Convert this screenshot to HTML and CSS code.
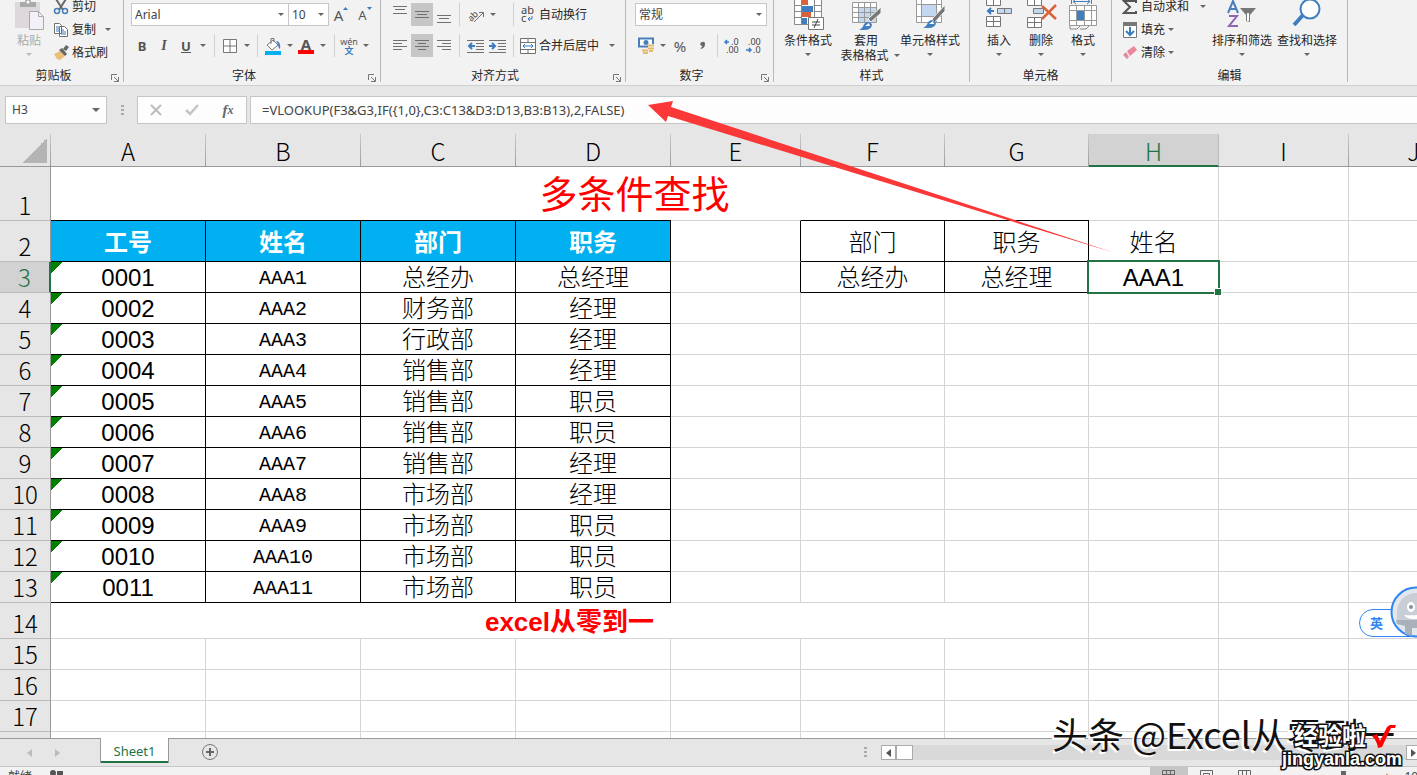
FILE: index.html
```html
<!DOCTYPE html>
<html lang="zh-CN">
<head>
<meta charset="utf-8">
<title>Sheet1</title>
<link rel="stylesheet" href="styles.css">
</head>
<body>
<header class="ribbon">
  <section class="group clipboard">
    <div class="body">
      <button class="big paste" disabled>
        <svg width="32" height="36" viewBox="0 0 32 36"><rect x="2" y="7" width="25" height="26" fill="#dcd8dc"/><path d="M7 12V7h5a3 3 0 0 1 6 0h5v5z" fill="#aaa"/><circle cx="15" cy="7" r="1.500" fill="#fff"/><path d="M16.500 16.500h9l5 5v13h-14z" fill="#f4f0f8" stroke="#aaa8ac"/><path d="M25.500 16.500v5h5" fill="none" stroke="#aaa8ac"/></svg>
        <span>粘贴</span><i class="caret pale"></i>
      </button>
      <div class="stack">
        <button><svg width="16" height="16" viewBox="0 0 16 16"><path d="M3 0l7 11M13 0L6 11" stroke="#6a6a6a" stroke-width="2"/><circle cx="4" cy="12" r="2.500" fill="none" stroke="#4a7ebb" stroke-width="1.500"/><circle cx="12" cy="12" r="2.500" fill="none" stroke="#4a7ebb" stroke-width="1.500"/></svg>剪切</button>
        <button><svg width="16" height="16" viewBox="0 0 16 16"><path d="M1.500 1.500h5l2 2v8h-7zM6.500 4.500h5l3 3v7h-8z" fill="#fff" stroke="#707070"/><path d="M3 5h3M3 7h3M3 9h3M8 8h3M8 10h5M8 12h5" stroke="#3b7cc0"/></svg>复制<i class="caret far"></i></button>
        <button><svg width="16" height="16" viewBox="0 0 16 16"><path d="M1 9l6-3 5 5-5 4-3-1z" fill="#eabf7c"/><path d="M6 5l3-2 5 6-2 2zM10 4l3-4 3 2-3 4z" fill="#666"/></svg>格式刷</button>
      </div>
    </div>
    <h2>剪贴板</h2><svg class="launcher" width="8" height="8" viewBox="0 0 8 8"><path d="M.5 6V.5H6M3 3l4 4M7.500 3v4.500H3" fill="none" stroke="#777"/></svg>
  </section>

  <section class="group font">
    <div class="rows">
      <div class="row fields">
        <label class="pick"><select aria-label="字体"><option>Arial</option></select><i class="caret"></i></label>
        <label class="pick"><select aria-label="字号"><option>10</option></select><i class="caret"></i></label>
        <button class="grow" aria-label="增大字号">A<svg width="5" height="4" viewBox="0 0 5 4"><path d="M0 3l2.500-3L5 3z" fill="#3b7cc0"/></svg></button>
        <button class="grow small" aria-label="减小字号">A<svg width="5" height="4" viewBox="0 0 5 4"><path d="M0 0h5L2.500 3z" fill="#3b7cc0"/></svg></button>
      </div>
      <div class="row marks">
        <button><b>B</b></button><button><em>I</em></button><button><u>U</u></button><i class="caret"></i><span class="sep"></span>
        <button aria-label="边框"><svg width="14" height="14" viewBox="0 0 14 14"><path d="M.5.5h13v13H.5zM7 1v12M1 7h12" fill="#fff" stroke="#777"/></svg></button><i class="caret"></i><span class="sep"></span>
        <button aria-label="填充颜色"><svg width="18" height="18" viewBox="0 0 18 18"><path d="M3 8l6-5 5 5-6 5z" fill="#fff" stroke="#777"/><path d="M7 7V1.500h3V5" fill="none" stroke="#777"/><path d="M12 4q5 0 4 8-2-1-2-5z" fill="#4a7ebb"/><path d="M1 14h16v4H1z" fill="#00b0f0"/></svg></button><i class="caret"></i>
        <button aria-label="字体颜色" class="ink">A</button><i class="caret"></i><span class="sep"></span>
        <button class="pinyin"><span>wén</span><span>文</span></button><i class="caret"></i>
      </div>
    </div>
    <h2>字体</h2><svg class="launcher" width="8" height="8" viewBox="0 0 8 8"><path d="M.5 6V.5H6M3 3l4 4M7.500 3v4.500H3" fill="none" stroke="#777"/></svg>
  </section>

  <section class="group align">
    <div class="rows">
      <div class="row aligns">
        <button aria-label="顶端对齐"><svg width="14" height="22" viewBox="0 0 14 22"><path d="M0 2.500h14M2 5.500h10M0 9.500h14" stroke="#707070"/></svg></button>
        <button class="on" aria-label="垂直居中"><svg width="14" height="22" viewBox="0 0 14 22"><path d="M0 7.500h14M2 10.500h10M0 13.500h14" stroke="#707070"/></svg></button>
        <button aria-label="底端对齐"><svg width="14" height="22" viewBox="0 0 14 22"><path d="M0 11.500h14M2 14.500h10M0 18.500h14" stroke="#707070"/></svg></button>
        <span class="sep"></span>
        <button aria-label="方向"><svg width="18" height="18" viewBox="0 0 18 18"><text x="0" y="12" class="ab" transform="rotate(-45 7 9)">ab</text><path d="M7 16l9-9M12 6.500h4.500V11" fill="none" stroke="#707070"/></svg></button><i class="caret"></i>
        <span class="sep"></span>
        <button class="wide"><svg width="16" height="18" viewBox="0 0 16 18"><text x="1" y="8" class="abc">ab</text><text x="1" y="16" class="abc">c</text><path d="M12 10v3H8m2-2l-2 2 2 2" fill="none" stroke="#3b7cc0"/></svg>自动换行</button>
      </div>
      <div class="row aligns">
        <button aria-label="左对齐"><svg width="14" height="14" viewBox="0 0 14 14"><path d="M0 1.500h14M0 4.500h9M0 7.500h14M0 10.500h9" stroke="#707070"/></svg></button>
        <button class="on" aria-label="居中"><svg width="14" height="14" viewBox="0 0 14 14"><path d="M0 1.500h14M3 4.500h8M0 7.500h14M3 10.500h8" stroke="#707070"/></svg></button>
        <button aria-label="右对齐"><svg width="14" height="14" viewBox="0 0 14 14"><path d="M0 1.500h14M5 4.500h9M0 7.500h14M5 10.500h9" stroke="#707070"/></svg></button>
        <span class="sep"></span>
        <button aria-label="减少缩进"><svg width="17" height="14" viewBox="0 0 17 14"><path d="M0 1.500h17M9 4.500h8M9 7.500h8M9 10.500h8M0 13.500h17" stroke="#707070"/><path d="M8 7H2m3-3L2 7l3 3" fill="none" stroke="#3b7cc0" stroke-width="2"/></svg></button>
        <button aria-label="增加缩进"><svg width="17" height="14" viewBox="0 0 17 14"><path d="M0 1.500h17M9 4.500h8M9 7.500h8M9 10.500h8M0 13.500h17" stroke="#707070"/><path d="M0 7h6M3 4l3 3-3 3" fill="none" stroke="#3b7cc0" stroke-width="2"/></svg></button>
        <span class="sep"></span>
        <button class="wide"><svg width="16" height="16" viewBox="0 0 16 16"><path d="M.5.5h15v15H.5zM.5 4.500h15M.5 11.500h15M8 1v3M8 12v3" fill="#fff" stroke="#707070"/><path d="M3 8h10M5 6L3 8l2 2M11 6l2 2-2 2" fill="none" stroke="#3b7cc0"/></svg>合并后居中<i class="caret far"></i></button>
      </div>
    </div>
    <h2>对齐方式</h2><svg class="launcher" width="8" height="8" viewBox="0 0 8 8"><path d="M.5 6V.5H6M3 3l4 4M7.500 3v4.500H3" fill="none" stroke="#777"/></svg>
  </section>

  <section class="group number">
    <div class="rows">
      <div class="row"><label class="pick full"><select aria-label="数字格式"><option>常规</option></select><i class="caret"></i></label></div>
      <div class="row nums">
        <button aria-label="会计数字格式"><svg width="17" height="17" viewBox="0 0 17 17"><path d="M1 1.500h14v8H1z" fill="#fff" stroke="#4a7ebb" stroke-width="2"/><circle cx="8" cy="5.500" r="2.500" fill="#4a7ebb"/><path d="M10 7h7v8H4v-4h6z" fill="#f2f2f2"/><path d="M10 8.500h6M10 11.500h6M4 13.500h6M5 16h5M11 14h4" stroke="#e8b968" stroke-width="2"/></svg></button><i class="caret"></i>
        <button class="pct">%</button><button aria-label="千位分隔样式"><svg width="8" height="12" viewBox="0 0 8 12"><path d="M4 2a2 2 0 0 1 3 2q0 4-4 5l-.5-1Q4 7.500 4.500 6A2 2 0 0 1 4 2z" fill="#666"/></svg></button><span class="sep"></span>
        <button aria-label="增加小数位数"><svg width="16" height="16" viewBox="0 0 16 16"><path d="M5 4H1m2-2L1 4l2 2" fill="none" stroke="#3b7cc0" stroke-width="1.500"/><text x="7" y="7" class="dec">.0</text><text x="2" y="15" class="dec">.00</text></svg></button>
        <button aria-label="减少小数位数"><svg width="16" height="16" viewBox="0 0 16 16"><path d="M0 12h5M3 10l2 2-2 2" fill="none" stroke="#3b7cc0" stroke-width="1.500"/><text x="2" y="7" class="dec">.00</text><text x="7" y="15" class="dec">.0</text></svg></button>
      </div>
    </div>
    <h2>数字</h2><svg class="launcher" width="8" height="8" viewBox="0 0 8 8"><path d="M.5 6V.5H6M3 3l4 4M7.500 3v4.500H3" fill="none" stroke="#777"/></svg>
  </section>

  <section class="group styles">
    <div class="body">
      <button class="big"><svg width="32" height="36" viewBox="0 0 32 36"><path d="M2.500 0h27v29.500h-27z" fill="#fff"/><path d="M10 5h6v5h-6zM10 17h9v5h-9z" fill="#d9623c"/><path d="M10 11h11v6H10zM10 23h5v6h-5z" fill="#3f7fbf"/><path d="M2.500 0v29.500h27V0M2.500 10.500h7M21.500 10.500h8M2.500 16.500h7M21.500 16.500h8M2.500 22.500h7M9.500 5v24M22.500 5v24" fill="none" stroke="#888"/><path d="M16.500 22.500h15v12h-15z" fill="#fff" stroke="#777"/><path d="M20 27h8M20 30h8M26 24l-4 9" stroke="#444"/></svg><span>条件格式</span><i class="caret"></i></button>
      <button class="big"><svg width="32" height="36" viewBox="0 0 32 36"><path d="M2.500 7.500h24v20h-24z" fill="#fff"/><path d="M8 12h19v15H8z" fill="#c3d7ee"/><path d="M2.500 7.500h24v20h-24zM2.500 12.500h24M2.500 17.500h24M2.500 22.500h24M8.500 8v19M14.500 8v19M20.500 8v19" fill="none" stroke="#999"/><path d="M31 12v6l-10 9-3-3z" fill="#777" stroke="#f2f2f2"/><path d="M9 35q4-2 5-6 4-4 8 0 0 6-8 6z" fill="#3f7fbf"/><path d="M15 31l4-3 1 3" fill="#fff"/></svg><span>套用</span><span class="second">表格格式<i class="caret"></i></span></button>
      <button class="big"><svg width="32" height="36" viewBox="0 0 32 36"><path d="M2.500 0v27.500h25V0" fill="#fff"/><path d="M8 10h14v11H8z" fill="#c3d7ee"/><path d="M2.500 0v27.500h25V0M2.500 9.500h25M2.500 21.500h25M7.500 5v22M22.500 5v22" fill="none" stroke="#999"/><path d="M31 10v6L21 27l-3-3z" fill="#777" stroke="#f2f2f2"/><path d="M9 33q4-2 5-6 4-4 8 0 0 6-8 6z" fill="#3f7fbf"/><path d="M15 29l4-3 1 3" fill="#fff"/></svg><span>单元格样式</span><i class="caret"></i></button>
    </div>
    <h2>样式</h2>
  </section>

  <section class="group cells">
    <div class="body">
      <button class="big"><svg width="32" height="36" viewBox="0 0 32 36"><path d="M3.500 4.500h14v6h-14zM10.500 4v6M3.500 21.500h14v10h-14zM3.500 26.500h14M10.500 22v10" fill="#fff" stroke="#777"/><path d="M14.500 13.500h14v5h-14zM21.500 14v5" fill="#c3d7ee" stroke="#777"/><path d="M11 16H5m3-3l-3 3 3 3" fill="none" stroke="#3b7cc0" stroke-width="2"/></svg><span>插入</span><i class="caret"></i></button>
      <button class="big"><svg width="32" height="36" viewBox="0 0 32 36"><path d="M2.500 4.500h14v6h-14zM9.500 4v6M2.500 22.500h14v10h-14zM2.500 27.500h14M9.500 23v10" fill="#fff" stroke="#777"/><path d="M8.500 13.500h10v5h-10z" fill="#c3d7ee" stroke="#777"/><path d="M17 11l14 13M31 10L17 24" stroke="#d9623c" stroke-width="2.500"/></svg><span>删除</span><i class="caret"></i></button>
      <button class="big"><svg width="32" height="36" viewBox="0 0 32 36"><path d="M2.500 10.500h27v20h-27z" fill="#fff"/><path d="M4.500 4v5M24.500 4v5M6 6.500h17M9 4L6 6.500 9 9M20 4l3 2.500L20 9" fill="none" stroke="#3f7fbf"/><path d="M2.500 10.500h27v20h-27zM2.500 15.500h27M2.500 25.500h27M9.500 11v20M17.500 11v20M24.500 11v20" fill="none" stroke="#999"/><path d="M10 16h7v9h-7z" fill="#3f7fbf"/><path d="M3 31v3h7l3-3M13 34h6l3-3" fill="none" stroke="#888"/></svg><span>格式</span><i class="caret"></i></button>
    </div>
    <h2>单元格</h2>
  </section>

  <section class="group editing">
    <div class="body">
      <div class="stack">
        <button><svg width="16" height="16" viewBox="0 0 16 16"><path d="M14 4V2H2l6 6-6 6h12v-2" fill="none" stroke="#555" stroke-width="2"/></svg>自动求和<i class="caret far"></i></button>
        <button><svg width="16" height="16" viewBox="0 0 16 16"><path d="M1.500.5h13v15h-13z" fill="#fff" stroke="#777"/><path d="M1 0h14v4H1z" fill="#777"/><path d="M8 5v8M4 9l4 4 4-4" fill="none" stroke="#3b7cc0" stroke-width="2"/></svg>填充<i class="caret"></i></button>
        <button><svg width="16" height="16" viewBox="0 0 16 16"><path d="M5 6l7-5 3 4-7 6z" fill="#e8879a"/><path d="M4 7l3 5-2 2-4-4z" fill="#e8879a"/></svg>清除<i class="caret"></i></button>
      </div>
      <button class="big"><svg width="32" height="36" viewBox="0 0 32 36"><path d="M2 18L7 6l5 12M4 14h6" fill="none" stroke="#4a7ebb" stroke-width="2"/><path d="M3 21h8L3 31h9" fill="none" stroke="#9163b5" stroke-width="2"/><path d="M14 13h16l-6 7v7l-4-1v-6z" fill="#777"/><path d="M21 18h2v8h-2z" fill="#fff"/></svg><span>排序和筛选</span><i class="caret"></i></button>
      <button class="big"><svg width="32" height="36" viewBox="0 0 32 36"><path d="M12 20L3 30" stroke="#3f7fbf" stroke-width="4"/><circle cx="19" cy="14" r="9.500" fill="#fff" stroke="#3f7fbf" stroke-width="2"/></svg><span>查找和选择</span><i class="caret"></i></button>
    </div>
    <h2>编辑</h2>
  </section>
</header>

<div class="formula-bar">
  <label class="namebox"><input value="H3" aria-label="名称框"><i class="caret large"></i></label>
  <span class="dots"></span>
  <div class="fx">
    <button aria-label="取消"><svg width="14" height="12" viewBox="0 0 14 12"><path d="M2 1l10 10M12 1L2 11" stroke="#bdbdbd" stroke-width="2"/></svg></button>
    <button aria-label="输入"><svg width="14" height="12" viewBox="0 0 14 12"><path d="M1 6l4 4 8-9" fill="none" stroke="#c4c4c4" stroke-width="2.500"/></svg></button>
    <button class="fn">f<small>x</small></button>
  </div>
  <input class="formula" aria-label="编辑栏" value="=VLOOKUP(F3&amp;G3,IF({1,0},C3:C13&amp;D3:D13,B3:B13),2,FALSE)">
</div>

<main class="sheet">
<table>
<colgroup><col class="c-row"><col class="c-data" span="4"><col class="c-mid"><col class="c-look" span="2"><col class="c-mid" span="3"></colgroup>
<thead><tr><th class="corner"></th><th>A</th><th>B</th><th>C</th><th>D</th><th>E</th><th>F</th><th>G</th><th class="cur">H</th><th>I</th><th>J</th></tr></thead>
<tbody>
<tr class="r1"><th>1</th><td colspan="8" class="title">多条件查找</td><td></td><td></td></tr>
<tr class="r2"><th>2</th><td class="h">工号</td><td class="h">姓名</td><td class="h">部门</td><td class="h">职务</td><td class="edge"></td><td class="k">部门</td><td class="k">职务</td><td>姓名</td><td></td><td></td></tr>
<tr><th class="cur">3</th><td class="k id">0001</td><td class="k mono">AAA1</td><td class="k">总经办</td><td class="k">总经理</td><td class="edge"></td><td class="k">总经办</td><td class="k">总经理</td><td class="sel">AAA1</td><td></td><td></td></tr>
<tr><th>4</th><td class="k id">0002</td><td class="k mono">AAA2</td><td class="k">财务部</td><td class="k">经理</td><td></td><td></td><td></td><td></td><td></td><td></td></tr>
<tr><th>5</th><td class="k id">0003</td><td class="k mono">AAA3</td><td class="k">行政部</td><td class="k">经理</td><td></td><td></td><td></td><td></td><td></td><td></td></tr>
<tr><th>6</th><td class="k id">0004</td><td class="k mono">AAA4</td><td class="k">销售部</td><td class="k">经理</td><td></td><td></td><td></td><td></td><td></td><td></td></tr>
<tr><th>7</th><td class="k id">0005</td><td class="k mono">AAA5</td><td class="k">销售部</td><td class="k">职员</td><td></td><td></td><td></td><td></td><td></td><td></td></tr>
<tr><th>8</th><td class="k id">0006</td><td class="k mono">AAA6</td><td class="k">销售部</td><td class="k">职员</td><td></td><td></td><td></td><td></td><td></td><td></td></tr>
<tr><th>9</th><td class="k id">0007</td><td class="k mono">AAA7</td><td class="k">销售部</td><td class="k">经理</td><td></td><td></td><td></td><td></td><td></td><td></td></tr>
<tr><th>10</th><td class="k id">0008</td><td class="k mono">AAA8</td><td class="k">市场部</td><td class="k">经理</td><td></td><td></td><td></td><td></td><td></td><td></td></tr>
<tr><th>11</th><td class="k id">0009</td><td class="k mono">AAA9</td><td class="k">市场部</td><td class="k">职员</td><td></td><td></td><td></td><td></td><td></td><td></td></tr>
<tr><th>12</th><td class="k id">0010</td><td class="k mono">AAA10</td><td class="k">市场部</td><td class="k">职员</td><td></td><td></td><td></td><td></td><td></td><td></td></tr>
<tr><th>13</th><td class="k id">0011</td><td class="k mono">AAA11</td><td class="k">市场部</td><td class="k">职员</td><td></td><td></td><td></td><td></td><td></td><td></td></tr>
<tr class="r14"><th>14</th><td colspan="7" class="note">excel从零到一</td><td></td><td></td><td></td></tr>
<tr><th>15</th><td></td><td></td><td></td><td></td><td></td><td></td><td></td><td></td><td></td><td></td></tr>
<tr><th>16</th><td></td><td></td><td></td><td></td><td></td><td></td><td></td><td></td><td></td><td></td></tr>
<tr><th>17</th><td></td><td></td><td></td><td></td><td></td><td></td><td></td><td></td><td></td><td></td></tr>
<tr><th></th><td></td><td></td><td></td><td></td><td></td><td></td><td></td><td></td><td></td><td></td></tr>
</tbody>
</table>
</main>

<nav class="tabs">
  <button class="nav" aria-label="上一个"><i class="tri left"></i></button>
  <button class="nav" aria-label="下一个"><i class="tri right"></i></button>
  <button class="tab">Sheet1</button>
  <button class="add" aria-label="新工作表"><svg width="16" height="16" viewBox="0 0 16 16"><circle cx="8" cy="8" r="7.500" fill="none" stroke="#777"/><path d="M8 4v8M4 8h8" stroke="#666" stroke-width="2"/></svg></button>
  <div class="scroll">
    <span class="dots"></span>
    <button class="step" aria-label="向左"><i class="tri left dark"></i></button>
    <div class="track"><span class="thumb"></span></div>
    <button class="step" aria-label="向右"><i class="tri right dark"></i></button>
  </div>
</nav>

<footer class="status">
  <span>就绪</span>
  <svg width="14" height="10" viewBox="0 0 14 10"><circle cx="3" cy="3" r="3" fill="#555"/><path d="M7 1h6v5H7zM1 7h6v3H1z" fill="#555"/></svg>
  <div class="views">
    <button class="on" aria-label="普通"><svg width="14" height="12" viewBox="0 0 14 12"><path d="M.5.5h12v11H.5zM.5 4.500h12M4.500 0v12M8.500 0v12" fill="none" stroke="#666"/></svg></button>
    <button aria-label="页面布局"><svg width="14" height="12" viewBox="0 0 14 12"><path d="M.5.5h12v11H.5zM3.500 3.500h6v8h-6zM4 6h5" fill="none" stroke="#666"/></svg></button>
    <button aria-label="分页预览"><svg width="14" height="12" viewBox="0 0 14 12"><path d="M.5.5h12v11H.5zM4.500 0v6M8.500 0v6M.5 5.500h12" fill="none" stroke="#666"/></svg></button>
  </div>
  <span class="knob"></span><span class="plus">+</span><span class="zoom">100%</span>
</footer>

<svg class="arrow" width="480" height="160" viewBox="0 0 480 160"><path d="M8 5l25-4-2 6 444 146L28 16l-2 6z" fill="#fb3838"/></svg>

<div class="ime"><span>英</span><svg width="52" height="52" viewBox="0 0 52 52"><circle cx="26" cy="26" r="24.500" fill="#e3e6ea" stroke="#2e86f5" stroke-width="2"/><path d="M7 35V26a19 19 0 0 1 38 0v9z" fill="#c9ced6"/><path d="M6 34h40v3l-9 3v8l-7 2v-8h-8v8l-7-2v-8l-8-2z" fill="#a9b0bc"/><ellipse cx="21" cy="21" rx="4" ry="5" fill="#fff"/><circle cx="21" cy="21" r="2" fill="#8790a0"/><path d="M14 29q12 1 20-1-2 5-10 5-8 0-10-4z" fill="#fff"/></svg></div>

<div class="mark author">头条 @Excel从零到一</div>
<div class="mark site"><span>经验啦</span><svg width="26" height="26" viewBox="0 0 26 26"><path d="M1 12l5-2 3 7 7-14 3-2h6l-1 3h-4l-9 19-4 1q-1-7-6-12z" fill="#f00"/></svg></div>
<div class="mark domain">jingyanla.com</div>
</body>
</html>
```
FILE: styles.css
```css
* { box-sizing: border-box; }
body {
  margin: 0; height: 100vh; overflow: hidden; position: relative;
  display: flex; flex-direction: column;
  background: #e6e6e6; color: #262626;
  font: 12px/16px "Noto Sans", "Noto Sans CJK SC", sans-serif;
}
button, input, select { font: inherit; color: inherit; border: 0; padding: 0; margin: 0; background: none; border-radius: 0; }
button { display: flex; align-items: center; justify-content: center; white-space: nowrap; }
svg { display: block; flex: none; }
.caret { display: block; width: 0; height: 0; flex: none; justify-self: center; border: 3px solid transparent; border-top-color: #666; border-bottom: 0; }
.caret.pale { border-top-color: #bbb; }
.caret.large { border-width: 4px 4px 0; }

/* Ribbon */
.ribbon { flex: none; display: flex; height: 86px; overflow: hidden; background: #f2f2f2; border-bottom: 1px solid #d0d0d0; }
.group { position: relative; height: 82px; flex: none; display: flex; flex-direction: column; justify-content: space-between; border-right: 1px solid #b8b8b8; }
.group h2 { margin: 0; font-size: 12px; font-weight: 400; line-height: 12px; text-align: center; }
.group:has(.launcher) h2 { padding-right: 16px; }
.launcher { position: absolute; right: 4px; bottom: 0; }
.body { display: flex; margin-top: -5px; }
.rows { display: flex; flex-direction: column; gap: 8px; padding: 3px 0 0 7px; }
.row { display: grid; align-items: center; height: 23px; }
.stack { display: flex; flex-direction: column; }
.stack button { height: 23px; gap: 3px; justify-content: flex-start; }
.stack .far { margin-left: 8px; }
.big { flex-direction: column; justify-content: flex-start; height: 66px; }
.big > span { line-height: 15px; }
.big > svg { margin-bottom: 2px; }
.big > .caret { margin-top: 5px; }
.big .second { display: flex; align-items: center; gap: 5px; margin-right: -8px; }
.paste { color: #aaa; }
.sep { width: 1px; height: 23px; background: #d0d0d0; justify-self: center; }
.pick { position: relative; height: 23px; border: 1px solid #c6c6c6; background: #fff; }
.pick select { width: 100%; height: 21px; padding-left: 3px; appearance: none; display: block; color: #444; }
.pick .caret { position: absolute; right: 4px; top: 9px; }

.clipboard { width: 124px; }
.clipboard .body { padding-left: 13px; gap: 8px; }
.clipboard .stack .far { margin-left: 6px; }
.font { width: 257px; }
.fields { grid-template-columns: 158px 40px 24px 24px; }
.fields .pick + .pick { border-left: 0; }
.grow { align-items: flex-start; font-size: 15px; color: #555; }
.grow.small { font-size: 13px; }
.marks { grid-template-columns: 22px 22px 22px 12px 11px 20px 13px 9px 21px 13px 20px 13px 10px 20px 13px; color: #555; font-size: 13px; }
.marks em { font-family: "Liberation Serif", serif; font-weight: 700; font-size: 14px; }
.marks u { font-weight: 700; }
.ink { justify-self: center; width: 16px; height: 17px; border-bottom: 4px solid #f00; font-weight: 700; font-size: 15px; }
.pinyin { flex-direction: column; font-size: 9px; line-height: 9px; }
.pinyin span + span { color: #3b7cc0; font-weight: 700; }
.align { width: 245px; }
.aligns { grid-template-columns: 22px 22px 22px 9px 23px 21px 10px auto; justify-content: start; padding-left: 1px; }
.align .rows { padding-left: 0; margin-left: 7px; }
.aligns button { height: 23px; }
.aligns .on { background: #c6c6c6; }
.aligns > .caret { justify-self: start; margin-left: 3px; }
.wide { gap: 3px; margin-left: 2px; }
.wide .far { margin-left: 7px; }
.ab { font: 9px "Noto Sans", sans-serif; fill: #444; }
.abc { font: 11px "Noto Sans", sans-serif; fill: #444; }
.dec { font: 9px "Noto Sans", sans-serif; fill: #444; }
.number { width: 148px; }
.number .rows { padding-left: 9px; }
.pick.full { width: 132px; }
.nums { grid-template-columns: 22px 12px 22px 22px 8px 22px 22px; color: #555; }
.pct { font-size: 15px; }
.styles { width: 196px; }
.styles .body { padding-left: 10px; gap: 6px; }
.styles .big:nth-child(2) { width: 56px; }
.cells { width: 142px; }
.cells .body { padding-left: 8px; }
.cells .big { width: 42px; }
.editing { width: 236px; }
.editing .body { padding-left: 10px; gap: 5px; }
.editing .stack { width: 85px; }

/* Formula bar */
.formula-bar { flex: none; display: flex; align-items: center; height: 48px; padding-left: 5px; color: #444; }
.namebox, .fx, .formula { height: 28px; border: 1px solid #c6c6c6; background: #fdfdfd; }
.namebox { display: flex; align-items: center; width: 102px; padding: 0 6px; }
.namebox input { width: 100%; min-width: 0; }
.dots { width: 3px; height: 11px; margin: 0 13px 0 14px; background: repeating-linear-gradient(#aaa 0 2px, transparent 2px 4px); }
.fx { display: grid; grid-template-columns: repeat(3, 1fr); width: 110px; margin-right: 3px; }
.fn { font: italic 700 15px "Liberation Serif", serif; color: #666; }
.fn small { font-size: 12px; }
.formula { flex: 1; min-width: 0; border-right: 0; padding-left: 11px; font-size: 13px; }

/* Grid */
.sheet { flex: 1; min-height: 0; overflow: hidden; background: #fff; }
table { table-layout: fixed; width: 1479px; border-collapse: separate; border-spacing: 0; color: #000; }
.c-row { width: 51px; }
.c-data { width: 155px; }
.c-mid { width: 130px; }
.c-look { width: 144px; }
tr { height: 31px; }
thead tr { height: 33px; }
.r1 { height: 53px; }
.r2 { height: 42px; }
.r14 { height: 36px; }
th { padding: 0; background: #e6e6e6; font: 300 24px/28px "Noto Sans CJK SC", sans-serif; }
thead th { padding-top: 2px; border-right: 1px solid; border-bottom: 1px solid #999; border-image: linear-gradient(#ccc, #999) 1; }
thead th.cur { background: #d2d2d2; color: #217346; border-image: none; border-right-color: #bbb; border-bottom: 2px solid #217346; }
thead .corner { background: linear-gradient(135deg, transparent 50%, #b4b4b4 50%) 22px 4px / 25px 25px no-repeat #e6e6e6; }
tbody th { vertical-align: bottom; padding-bottom: 1px; border-right: 1px solid #999; border-bottom: 1px solid #bbb; }
tbody th.cur { background: #d2d2d2; color: #217346; border-right: 2px solid #217346; }
td { padding: 2px 0 0; text-align: center; border-right: 1px solid #d4d4d4; border-bottom: 1px solid #d4d4d4; font: 24px/28px "Liberation Sans", "Noto Sans CJK SC", sans-serif; font-weight: 300; white-space: nowrap; }
.r1 > * { border-bottom: 0; }
.r2 td { padding-top: 4px; border-top: 1px solid #d4d4d4; }
.r2 th { border-top: 1px solid #bbb; }
.k, .r2 .k, .h, .r2 .h { border-color: #000; }
.edge { border-right-color: #000; }
.h { background: #00b0f0; color: #fff; font-weight: 700; }
.id { background: linear-gradient(135deg, #008000 8px, transparent 8px) no-repeat; }
.mono { padding-top: 4px; font-family: "Liberation Mono", monospace; font-size: 20px; line-height: 26px; }
.title { color: #f00; font-size: 38px; line-height: 50px; font-weight: 400; }
.note { color: #f00; font-size: 26px; font-weight: 700; }
.sel { position: relative; }
.sel::before { content: ""; position: absolute; inset: -2px; border: 2px solid #217346; }
.sel::after { content: ""; position: absolute; right: -3px; bottom: -3px; width: 6px; height: 6px; background: #217346; border: 1px solid #fff; border-width: 1px 0 0 1px; }

/* Sheet tabs */
.tabs { flex: none; display: flex; height: 29px; border-top: 1px solid #999; border-bottom: 1px solid #c6c6c6; }
.nav { width: 28px; }
.nav:first-child { margin-left: 15px; }
.tri { width: 0; height: 0; border: 4px solid transparent; }
.tri.left { border-right: 5px solid #bbb; border-left: 0; }
.tri.right { border-left: 5px solid #bbb; border-right: 0; }
.tri.left.dark { border-right-color: #555; }
.tri.right.dark { border-left-color: #555; }
.tab { width: 69px; height: 25px; margin: -1px 33px 0 29px; background: #fff; color: #217346; border: solid #999; border-width: 0 1px; box-shadow: inset 0 -2px #217346; font-size: 13px; }
.add { height: 26px; }
.scroll { display: flex; align-items: center; width: 568px; margin-left: auto; margin-right: -4px; height: 27px; }
.step { width: 15px; height: 15px; background: #fff; border: 1px solid #aaa; }
.scroll .dots { margin-left: 11px; margin-right: 14px; }
.track { flex: 1; height: 15px; background: #d9d9d9; }
.thumb { display: block; width: 17px; height: 15px; background: #fff; border: 1px solid #aaa; }

/* Status bar */
.status { flex: none; display: flex; gap: 18px; height: 8px; overflow: hidden; background: #f2f2f2; padding-left: 8px; align-items: flex-start; color: #444; line-height: 20px; }
.status svg { margin-top: 3px; }
.views { display: flex; margin-left: auto; }
.views button { width: 38px; height: 16px; align-items: flex-start; }
.views .on { background: #c6c6c6; }
.knob { width: 5px; height: 12px; margin: 4px 0 0 59px; background: #666; }
.plus { margin-left: 20px; }
.zoom { margin: 0 -18px 0 -4px; }

/* Overlays */
.arrow { position: absolute; left: 640px; top: 100px; pointer-events: none; }
.ime { position: absolute; right: -25px; top: 586px; width: 83px; height: 52px; }
.ime span { position: absolute; left: 0; top: 23px; width: 70px; height: 28px; padding-left: 10px; border: 1px solid #2e86f5; border-radius: 14px; background: #fff; color: #2e86f5; font-size: 13px; font-weight: 700; line-height: 26px; }
.ime svg { position: absolute; right: 0; top: 0; }
.mark { position: absolute; white-space: nowrap; color: #fff; font-family: "Liberation Sans", "Noto Sans CJK SC", sans-serif; }
.author { right: 22px; bottom: 20px; color: #111; font-family: "Noto Sans CJK SC", sans-serif; font-size: 36px; line-height: 44px; text-shadow: -1px 1px #fff, -2px 2px #fff; }
.site { right: 20px; bottom: 24px; display: flex; align-items: center; gap: 5px; font-size: 24px; line-height: 28px; font-weight: 700; }
.site span, .domain { -webkit-text-stroke: 3px #111; paint-order: stroke fill; }
.domain { right: 15px; bottom: 4px; font-size: 18px; line-height: 24px; font-weight: 700; }
```
